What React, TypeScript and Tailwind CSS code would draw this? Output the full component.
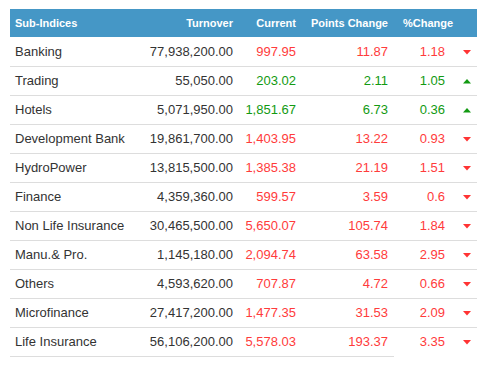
const rows: [string, string, string, string, string, "up" | "down"][] = [
  ["Banking", "77,938,200.00", "997.95", "11.87", "1.18", "down"],
  ["Trading", "55,050.00", "203.02", "2.11", "1.05", "up"],
  ["Hotels", "5,071,950.00", "1,851.67", "6.73", "0.36", "up"],
  ["Development Bank", "19,861,700.00", "1,403.95", "13.22", "0.93", "down"],
  ["HydroPower", "13,815,500.00", "1,385.38", "21.19", "1.51", "down"],
  ["Finance", "4,359,360.00", "599.57", "3.59", "0.6", "down"],
  ["Non Life Insurance", "30,465,500.00", "5,650.07", "105.74", "1.84", "down"],
  ["Manu.& Pro.", "1,145,180.00", "2,094.74", "63.58", "2.95", "down"],
  ["Others", "4,593,620.00", "707.87", "4.72", "0.66", "down"],
  ["Microfinance", "27,417,200.00", "1,477.35", "31.53", "2.09", "down"],
  ["Life Insurance", "56,106,200.00", "5,578.03", "193.37", "3.35", "down"],
];

function Arrow({ dir }: { dir: "up" | "down" }) {
  return (
    <svg width="8" height="5" viewBox="0 0 8 5" className="inline-block">
      {dir === "down" ? (
        <polygon points="0,0 8,0 4,4.5" fill="#ff3333" />
      ) : (
        <polygon points="0,4.5 8,4.5 4,0" fill="#129a12" />
      )}
    </svg>
  );
}

export default function App() {
  return (
    <div className="min-h-[365px] bg-white pt-[9px] pl-[10px] font-['Liberation_Sans',Arial,sans-serif]">
      <table className="w-[467px] table-fixed border-collapse">
        <colgroup>
          <col className="w-[120px]" />
          <col className="w-[109px]" />
          <col className="w-[63px]" />
          <col className="w-[92px]" />
          <col className="w-[57px]" />
          <col className="w-[26px]" />
        </colgroup>
        <thead>
          <tr className="h-[28px] bg-[#4597c6] text-[11px] font-bold text-white">
            <th className="pl-[5px] text-left">Sub-Indices</th>
            <th className="pr-[6px] text-right">Turnover</th>
            <th className="pr-[6px] text-right">Current</th>
            <th className="pr-[6px] text-right">Points Change</th>
            <th className="pl-[9px] text-left whitespace-nowrap">%Change</th>
            <th></th>
          </tr>
        </thead>
        <tbody className="text-[13px] text-[#333]">
          {rows.map(([name, turnover, current, pts, pct, dir], i) => {
            const last = i === rows.length - 1;
            const color = dir === "up" ? "text-[#129a12]" : "text-[#ff3b3b]";
            const b = "border-b border-[#dddddd]";
            return (
              <tr key={name} className="h-[29px]">
                <td className={`${b} pl-[5px] whitespace-nowrap`}>{name}</td>
                <td className={`${b} pr-[6px] text-right`}>{turnover}</td>
                <td className={`${b} pr-[6px] text-right ${color}`}>{current}</td>
                <td className={`${b} pr-[6px] text-right ${color}`}>{pts}</td>
                <td className={`${last ? "" : b} pr-[6px] text-right ${color}`}>{pct}</td>
                <td className={`${last ? "" : b} pl-[12px]`}>
                  <Arrow dir={dir} />
                </td>
              </tr>
            );
          })}
        </tbody>
      </table>
    </div>
  );
}
